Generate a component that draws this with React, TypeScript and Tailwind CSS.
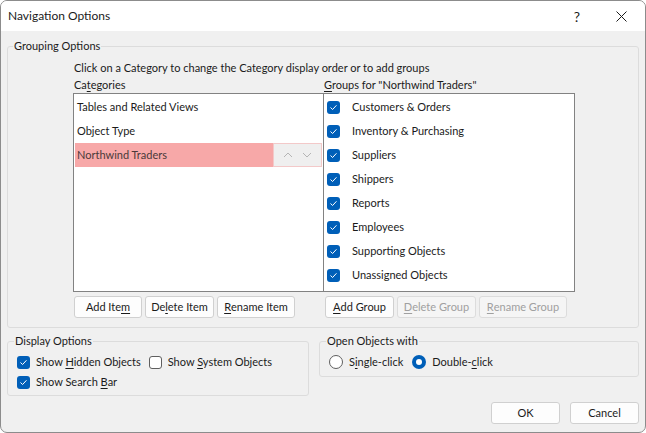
import React from 'react';

const font = { fontFamily: 'Lato, "Segoe UI", sans-serif' };

function Check({ checked = true }: { checked?: boolean }) {
  if (!checked) {
    return <span className="inline-block w-[13px] h-[13px] rounded-[3px] border border-[#5f5f5f] bg-white shrink-0" />;
  }
  return (
    <span className="inline-flex items-center justify-center w-[13px] h-[13px] rounded-[3px] bg-[#005fb8] shrink-0">
      <svg width="9" height="9" viewBox="0 0 9 9" fill="none">
        <path d="M1.8 4.8 L3.6 6.5 L7.2 2.6" stroke="white" strokeWidth="1" strokeLinecap="round" strokeLinejoin="round" />
      </svg>
    </span>
  );
}

function Radio({ on = false }: { on?: boolean }) {
  return on ? (
    <span className="inline-flex items-center justify-center w-[14px] h-[14px] rounded-full bg-[#005fb8] shrink-0">
      <span className="w-[6px] h-[6px] rounded-full bg-white" />
    </span>
  ) : (
    <span className="inline-block w-[14px] h-[14px] rounded-full border border-[#5f5f5f] bg-white shrink-0" />
  );
}

function Btn({ children, w, disabled = false }: { children: React.ReactNode; w: string; disabled?: boolean }) {
  return (
    <div
      className={`${w} h-[22px] flex items-center justify-center rounded-[3px] border whitespace-nowrap ${
        disabled ? 'text-[#a0a0a0] bg-[#f5f5f5] border-[#dcdcdc]' : 'text-[#1b1b1b] bg-[#fdfdfd] border-[#d0d0d0]'
      }`}
    >
      {children}
    </div>
  );
}

const u = (s: string) => <span className="underline underline-offset-2">{s}</span>;

const groups = [
  'Customers & Orders',
  'Inventory & Purchasing',
  'Suppliers',
  'Shippers',
  'Reports',
  'Employees',
  'Supporting Objects',
  'Unassigned Objects',
];

export default function App() {
  return (
    <div className="w-[646px] h-[433px] bg-[#f0f0f0] border border-[#8c8c8c] rounded-[7px] overflow-hidden text-[11px] text-[#1b1b1b] whitespace-nowrap" style={font}>
      {/* title bar */}
      <div className="h-[30px] bg-white flex items-center pl-[7px] text-[12px]">
        <span className="flex-1">Navigation Options</span>
        <span className="w-[24px] text-[14px] text-center mr-[27px]">?</span>
        <svg width="11" height="11" viewBox="0 0 11 11" className="mr-[18px]">
          <path d="M0.5 0.5 L10.5 10.5 M10.5 0.5 L0.5 10.5" stroke="#1b1b1b" strokeWidth="1" />
        </svg>
      </div>

      <div className="px-[6px]">
        {/* Grouping Options */}
        <fieldset className="mt-[7px] border border-[#dcdcdc] rounded-[3px] h-[290px] px-[5px]">
          <legend className="px-[1px] leading-[16px]">Grouping Options</legend>
          <div className="pl-[61px] mt-[6px] leading-[16px]">Click on a Category to change the Category display order or to add groups</div>
          <div className="flex pl-[60px]">
            <div className="w-[251px]">
              <div className="leading-[17px] pl-[1px]">Ca{u('t')}egories</div>
              <div className="h-[199px] border border-[#828282] bg-white pt-[1px] px-[1px]">
                <div className="h-[24px] flex items-center pl-[2px]">Tables and Related Views</div>
                <div className="h-[24px] flex items-center pl-[2px]">Object Type</div>
                <div className="h-[24px] flex items-center pl-[2px] bg-[#f7a8a8] text-[#4a3a3a]">
                  <span className="flex-1">Northwind Traders</span>
                  <div className="w-[49px] h-[24px] bg-[#efefef] border border-[#f3c9c9] flex items-center justify-around px-[4px]">
                    <svg width="10" height="6" viewBox="0 0 10 6"><path d="M1 5 L5 1 L9 5" stroke="#b5b5b5" fill="none" /></svg>
                    <svg width="10" height="6" viewBox="0 0 10 6"><path d="M1 1 L5 5 L9 1" stroke="#b5b5b5" fill="none" /></svg>
                  </div>
                </div>
              </div>
              <div className="flex gap-[3px] mt-[4px] pl-[1px]">
                <Btn w="w-[68px]">Add Ite{u('m')}</Btn>
                <Btn w="w-[69px]">De{u('l')}ete Item</Btn>
                <Btn w="w-[78px]">{u('R')}ename Item</Btn>
              </div>
            </div>
            <div className="w-[251px]">
              <div className="leading-[17px]">{u('G')}roups for "Northwind Traders"</div>
              <div className="h-[199px] border border-[#828282] border-l-0 bg-white pt-[1px]">
                {groups.map((g) => (
                  <div key={g} className="h-[24px] flex items-center pl-[3px]">
                    <Check />
                    <span className="ml-[12px]">{g}</span>
                  </div>
                ))}
              </div>
              <div className="flex gap-[3px] mt-[4px] pl-[1px]">
                <Btn w="w-[69px]">{u('A')}dd Group</Btn>
                <Btn w="w-[79px]" disabled>{u('D')}elete Group</Btn>
                <Btn w="w-[88px]" disabled>{u('R')}ename Group</Btn>
              </div>
            </div>
          </div>
        </fieldset>

        <div className="flex mt-[5px] gap-[10px]">
          <fieldset className="w-[303px] h-[63px] border border-[#dcdcdc] rounded-[3px] px-[9px]">
            <legend className="px-[1px] leading-[16px] -ml-[3px]">Display Options</legend>
            <div className="flex items-center h-[20px] mt-[3px]">
              <Check />
              <span className="ml-[6px]">Show {u('H')}idden Objects</span>
              <span className="ml-[8px] flex items-center">
                <Check checked={false} />
                <span className="ml-[6px]">Show {u('S')}ystem Objects</span>
              </span>
            </div>
            <div className="flex items-center h-[20px]">
              <Check />
              <span className="ml-[6px]">Show Search {u('B')}ar</span>
            </div>
          </fieldset>
          <div className="flex flex-col">
            <fieldset className="w-[320px] h-[44px] border border-[#dcdcdc] rounded-[3px] px-[9px]">
              <legend className="px-[1px] leading-[16px] -ml-[3px]">Open Objects with</legend>
              <div className="flex items-center h-[20px] mt-[3px]">
                <Radio />
                <span className="ml-[6px]">S{u('i')}ngle-click</span>
                <span className="ml-[9px] flex items-center">
                  <Radio on />
                  <span className="ml-[6px]">Double-{u('c')}lick</span>
                </span>
              </div>
            </fieldset>
            <div className="flex justify-end gap-[10px] mt-[25px]">
              <Btn w="w-[69px]">OK</Btn>
              <Btn w="w-[69px]">Cancel</Btn>
            </div>
          </div>
        </div>
      </div>
    </div>
  );
}
